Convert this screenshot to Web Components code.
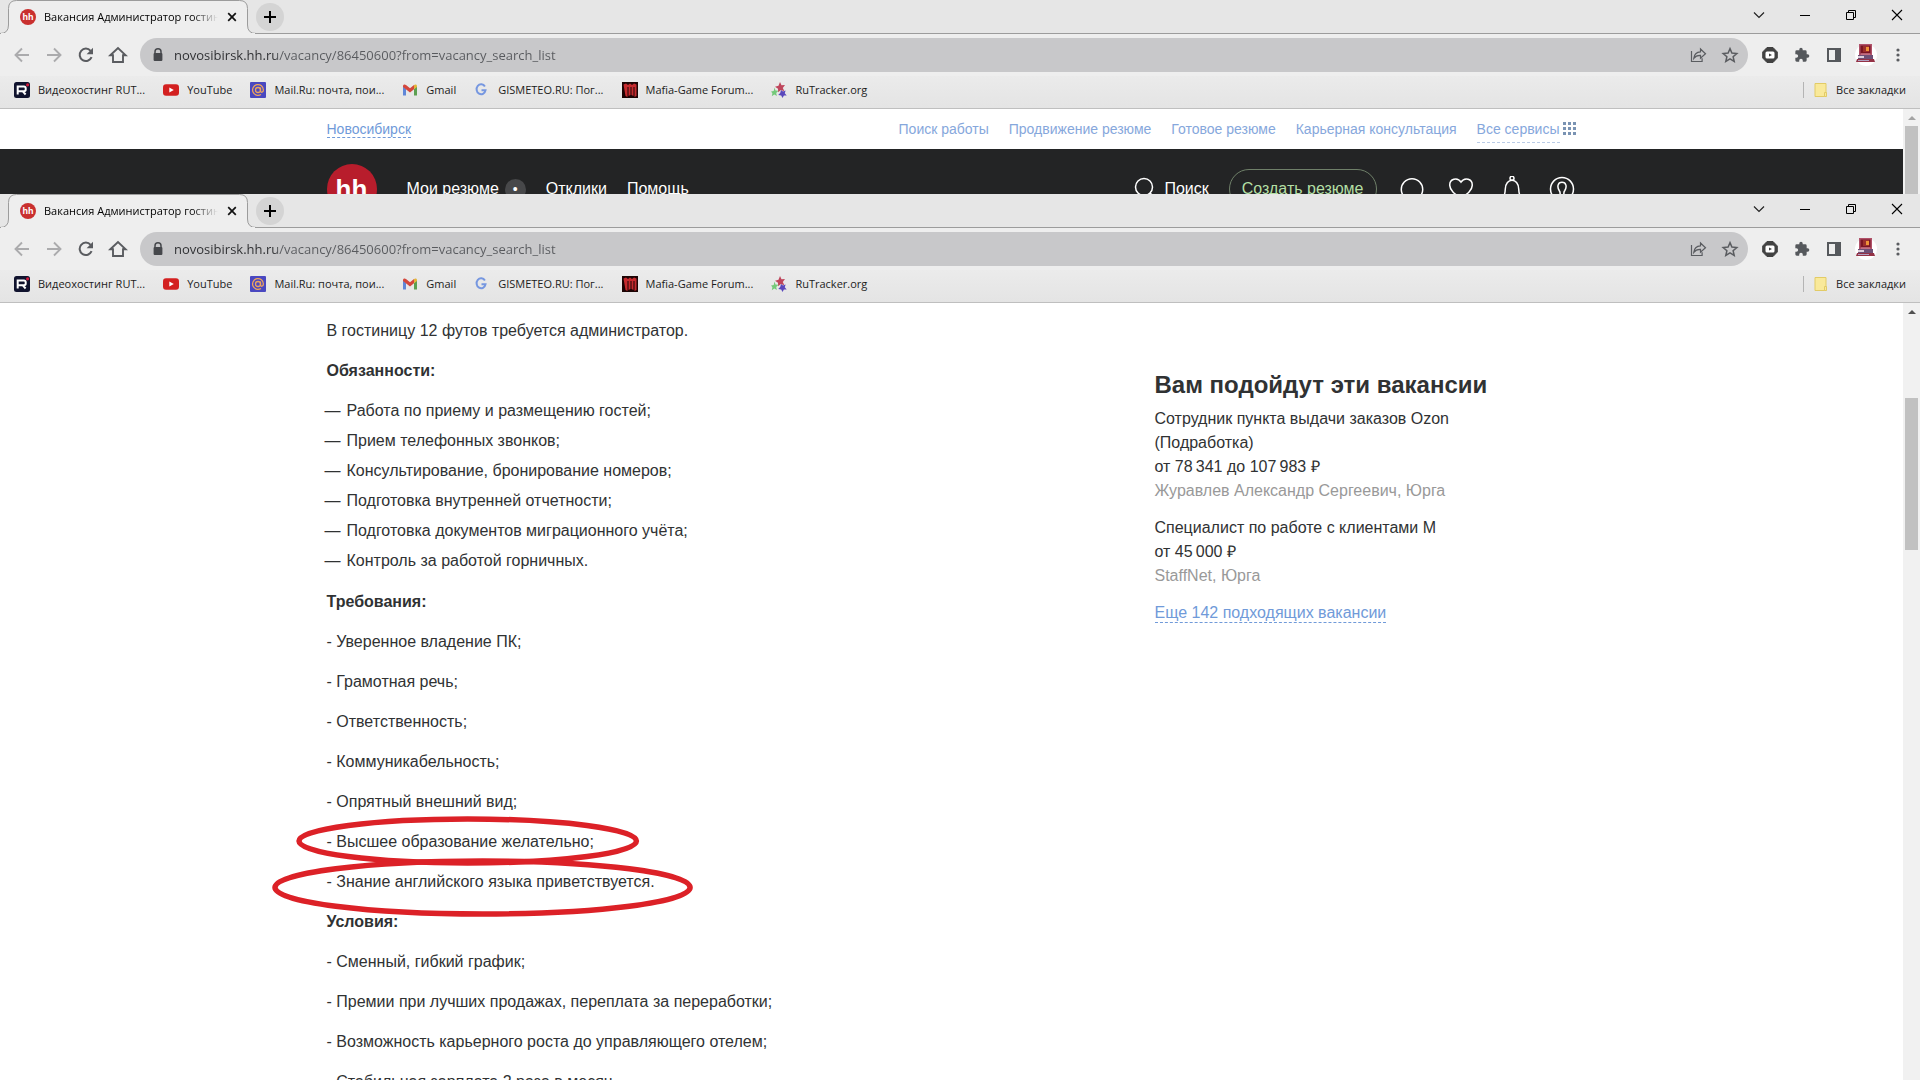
<!DOCTYPE html>
<html lang="ru">
<head>
<meta charset="utf-8">
<title>Вакансия Администратор гостиницы</title>
<style>
	html, body {height: 100%;}
	body {
		margin: 0;
		background: #fff;
		overflow: hidden;
	}
</style>
</head>
<body>
<hh-desktop>
	<browser-window slot="back" offset="0" thumb="300" idle>
		<hh-topbar></hh-topbar>
		<hh-header></hh-header>
	</browser-window>
	<browser-window slot="front" offset="78" thumb="152">
		<hh-vacancy>
			<hh-description></hh-description>
			<hh-similar slot="aside"></hh-similar>
		</hh-vacancy>
	</browser-window>
</hh-desktop>
<script>
const define = (name, html, init) => {
	const template = document.createElement('template');
	template.innerHTML = html;
	customElements.define(name, class extends HTMLElement {
		connectedCallback() {
			if (this.shadowRoot) return;
			this.attachShadow({mode: 'open'}).appendChild(template.content.cloneNode(true));
			if (init) init(this, this.shadowRoot);
		}
	});
};

// [viewBox size, markup]
const ICONS = {
	back: [20, '<path d="M17 10H4M10 3.5 3.5 10l6.500 6.500" fill="none" stroke="currentColor" stroke-width="1.900"/>'],
	forward: [20, '<path d="M3 10h13M10 3.500 16.500 10 10 16.500" fill="none" stroke="currentColor" stroke-width="1.900"/>'],
	reload: [20, '<path d="M15.600 12.200A6.200 6.200 0 1 1 14.600 5.800" fill="none" stroke="currentColor" stroke-width="2"/><path d="M17 2.800v6.400h-6.400z" fill="currentColor"/>'],
	home: [20, '<path d="M2.300 10.300 10 3l7.700 7.300H15V17H5v-6.700z" fill="none" stroke="currentColor" stroke-width="1.900"/>'],
	lock: [16, '<path d="M5 7V4.800a3 3 0 0 1 6 0V7" fill="none" stroke="currentColor" stroke-width="1.500"/><rect x="3.600" y="6" width="8.800" height="8" rx="1" fill="currentColor"/>'],
	share: [18, '<path d="M2.500 5v10.500h10.600v-3.300M4.800 12.300c.4-4.100 2.800-6.300 6.700-6.500V3l5 4.700-5 4.500V9.400c-3-.1-5.200.8-6.700 2.900z" fill="none" stroke="currentColor" stroke-width="1.200"/>'],
	star: [18, '<path d="m9 2.600 1.900 4.500 4.900.4-3.700 3.200 1.100 4.700L9 12.900l-4.200 2.500 1.100-4.700-3.700-3.200 4.900-.4z" fill="none" stroke="currentColor" stroke-width="1.500"/>'],
	video: [16, '<path d="M5 .5h6L15.300 5v6L11 15.500H5L.7 11V5z" fill="#424242" stroke="#424242" stroke-linejoin="round"/><rect x="3.500" y="4.500" width="9" height="7" rx="1.500" fill="#fff"/><path d="m7 6.500 3 1.500-3 1.500z" fill="#424242"/>'],
	puzzle: [24, '<path d="M20.500 11H19V7a2 2 0 0 0-2-2h-4V3.500a2.500 2.500 0 0 0-5 0V5H4a2 2 0 0 0-2 2v3.800h1.500a2.700 2.700 0 0 1 0 5.400H2V20a2 2 0 0 0 2 2h3.800v-1.500a2.700 2.700 0 0 1 5.400 0V22H17a2 2 0 0 0 2-2v-4h1.500a2.500 2.500 0 0 0 0-5z" fill="#55585c"/>'],
	panel: [16, '<path d="M1 1h14v14H1zM3 3v10h6V3z" fill="#55585c" fill-rule="evenodd"/>'],
	avatar: [22, '<circle cx="11" cy="11" r="11" fill="#fff"/><path d="M4 0h13v11H4z" fill="#b0526a"/><path d="M5.500 1.500h10v8h-10z" fill="#7a1522"/><path d="M8 2h6v6H8z" fill="#9c2f2c"/><path d="M11 3h3v4h-3z" fill="#ee9338"/><path d="M6 9.500h9v1H6z" fill="#d98a9a"/><path d="M3 11h15v4H3z" fill="#6e5076"/><path d="M3 12h6v2H3z" fill="#ded0dc"/><path d="M2 15h17l1 3H1z" fill="#943246"/><path d="M3 16h11v1H3z" fill="#b0a0c0"/>'],
	more: [16, '<circle cx="8" cy="3" r="1.600"/><circle cx="8" cy="8" r="1.600"/><circle cx="8" cy="13" r="1.600"/>'],
	down: [12, '<path d="m1 3.500 5 5 5-5" fill="none" stroke="#222" stroke-width="1.200"/>'],
	minimize: [12, '<path d="M1 6.500h10" stroke="#000"/>'],
	restore: [12, '<path d="M1.500 3.500h7v7h-7zM3.500 3.500v-2h7v7h-2" fill="none" stroke="#000"/>'],
	close: [12, '<path d="m1 1 10 10M11 1 1 11" stroke="#000" stroke-width="1.100"/>'],
	cross: [10, '<path d="m1.200 1.200 7.600 7.600M8.800 1.200 1.200 8.800" stroke="#111" stroke-width="1.700"/>'],
	plus: [14, '<path d="M7 1v12M1 7h12" stroke="#000" stroke-width="2"/>'],
	rutube: [16, '<rect width="16" height="16" rx="2.500" fill="#10132e"/><path d="M3.700 12.500v-8H10a1.700 1.700 0 0 1 1.700 1.700v1.300A1.700 1.700 0 0 1 10 9.200H3.700M8.600 9.200l3 3.300" fill="none" stroke="#fff" stroke-width="2"/><circle cx="13.600" cy="2.800" r="1.600" fill="#d21b3c"/>'],
	youtube: [16, '<rect y="2.300" width="16" height="11.400" rx="3" fill="#d32020"/><path d="m6.300 5.600 4.500 2.400-4.500 2.400z" fill="#fff"/>'],
	mail: [16, '<rect width="16" height="16" rx="1" fill="#4a48c0"/><circle cx="8" cy="8" r="2.500" fill="none" stroke="#eda45e" stroke-width="1.300"/><path d="M10.500 5.500v3.300c0 2.200 2.900 1.800 2.900-.8A5.400 5.400 0 1 0 11 12.500" fill="none" stroke="#eda45e" stroke-width="1.300"/>'],
	gmail: [16, '<path d="M1 4v9.500h3V7z" fill="#6087d8"/><path d="M12 7v6.500h3V4z" fill="#5da052"/><path d="M12 7.200 15 5V4c0-1.600-1.700-2-3-1z" fill="#e2b53a"/><path d="M1 4c0-1.600 1.800-2 3-1l4 3.200L12 3v4.200l-4 3.200L1 5z" fill="#d4473c"/>'],
	google: [16, '<path d="M9.400 4.900A4.500 5 0 1 0 10 8.600H6" transform="translate(1.500 -.3)" fill="none" stroke="#7697e0" stroke-width="2"/>'],
	mafia: [16, '<rect width="16" height="16" fill="#1c0404"/><path d="M1.500 2.500 4 1.500l2 1.500 2-1.500L10 3l2-1.500 2.500 1V14l-2 1V5h-1v9l-2-1V5h-1v8l-2 1V5h-1v10l-2-1z" fill="#c52a2e"/>'],
	rutracker: [16, '<path d="m9 0 1.500 3.200L14 3l-2.200 3 1.600 3.200L9.900 8 7.100 10.300 7 6.700 4 4.800l3.500-1z" fill="#bf465c"/><path d="m3.500 5.500 1 3 3 .3-2.300 2.100.7 3.100-2.600-1.600-2.500 1.900.6-3L0 9.500l2.700-.4z" fill="#75c97a"/><path d="m10 8 2 1.500 2.600-1-.8 2.700 1.900 2.300-2.800.1L11.500 16l-1.300-2.600-3-.3 2-2z" fill="#5a48bc"/>'],
	folder: [16, '<path d="M3 1.500h11v13H3z" fill="#f9e99a" stroke="#e2cb66"/><path d="M12.500 14.500v-4h2v4z" fill="#f9e99a" stroke="#e2cb66"/>'],
	apps: [14, '<path d="M0 1h3v3H0zM5 1h3v3H5zM10 1h3v3h-3zM0 6h3v3H0zM5 6h3v3H5zM10 6h3v3h-3zM0 11h3v3H0zM5 11h3v3H5zM10 11h3v3h-3z" fill="#7a93b3"/>'],
	search: [24, '<circle cx="12" cy="10" r="8.500" fill="none" stroke="#fff" stroke-width="1.500"/><path d="m18 16 5 5" stroke="#fff" stroke-width="1.500"/>'],
	chat: [24, '<path d="M5 20.500A10.700 10.700 0 1 1 19 20.500L12 23z" fill="none" stroke="#fff" stroke-width="1.500"/>'],
	heart: [24, '<path d="M12 21.500C6 17 1 13.500.8 8.600.2 1.700 8.500-.3 12 5.200 15.500-.3 23.800 1.700 23.200 8.600 23 13.500 18 17 12 21.500z" fill="none" stroke="#fff" stroke-width="1.500"/>'],
	bell: [26, '<circle cx="14" cy="2.300" r="2" fill="none" stroke="#fff" stroke-width="1.500"/><path d="M4 23c2-2 3-4 3.300-10 .2-5.500 3.200-8.700 6.700-8.700s6.500 3.200 6.700 8.700c.3 6 1.300 8 3.300 10z" fill="none" stroke="#fff" stroke-width="1.500"/>'],
	person: [26, '<circle cx="13" cy="13" r="11.500" fill="none" stroke="#fff" stroke-width="1.500"/><path d="M10.500 19.500c1.200-2 .7-3.500-.3-5C8 11 8.500 6.300 13 6.300s5 4.700 2.800 8.200c-1 1.500-1.500 3-.3 5" fill="none" stroke="#fff" stroke-width="1.500"/>'],
};

define('ui-icon', `
<style>
	:host {display: inline-flex; flex: none;}
	svg {display: block; fill: currentColor;}
</style>
`, (el, root) => {
	const [box, markup] = ICONS[el.getAttribute('name')];
	const size = el.getAttribute('size') || box;
	root.innerHTML += `<svg width="${size}" height="${size}" viewBox="0 0 ${box} ${box}" aria-hidden="true">${markup}</svg>`;
});

define('hh-logo', `
<style>
	:host {
		--size: 50px;
		display: inline-flex;
		flex: none;
		align-items: center;
		justify-content: center;
		width: var(--size);
		height: var(--size);
		border-radius: 50%;
		background: var(--red, #b81d2c);
		color: #fff;
		font: bold var(--text, 26px)/1 "Liberation Sans", Arial, sans-serif;
	}
</style>
<span>hh</span>
`);

define('browser-tabs', `
<style>
	:host {
		display: flex;
		height: 34px;
		box-sizing: border-box;
		border-bottom: 1px solid #9c9c9c;
		background: #e6e6e6;
		font: 11px/16px "Open Sans", "Noto Sans", sans-serif;
		color: #000;
	}
	button {
		display: flex;
		align-items: center;
		justify-content: center;
		border: 0;
		padding: 0;
		background: none;
	}
	/* the outline hangs over the strip's bottom line */
	.tab {
		position: relative;
		display: flex;
		align-items: center;
		width: 256px;
		height: 34px;
		box-sizing: border-box;
		padding: 0 18px 0 20px;
		gap: 8px;
		flex: none;
	}
	.tab > svg {position: absolute; left: 0; top: 0;}
	.tab > :not(svg) {position: relative;}
	hh-logo {--size: 16px; --text: 9px; --red: #c9302f;}
	.title {
		flex: 1;
		overflow: hidden;
		white-space: nowrap;
		-webkit-mask-image: linear-gradient(90deg, #000 85%, transparent);
		mask-image: linear-gradient(90deg, #000 85%, transparent);
	}
	.tab button {width: 12px; height: 16px;}
	.new {
		width: 28px;
		height: 28px;
		margin-top: 3px;
		border-radius: 50%;
		background: #d4d4d4;
	}
	.controls {display: flex; height: 29px; margin-left: auto;}
	.controls button {width: 46px;}
</style>
<div class="tab">
	<svg width="256" height="34" aria-hidden="true">
		<path d="M0 33.500Q8.500 33.500 8.500 25V8.500Q8.500.5 16.500.5H239.500Q247.500.5 247.500 8.500V25Q247.500 33.500 256 33.500" fill="#eee" stroke="#9c9c9c"/>
		<path d="M1 33.500H255" stroke="#eee"/>
	</svg>
	<hh-logo></hh-logo>
	<span class="title">Вакансия Администратор гостиницы</span>
	<button aria-label="Закрыть вкладку"><ui-icon name="cross"></ui-icon></button>
</div>
<button class="new" aria-label="Новая вкладка"><ui-icon name="plus"></ui-icon></button>
<div class="controls">
	<button aria-label="Поиск вкладок"><ui-icon name="down"></ui-icon></button>
	<button aria-label="Свернуть"><ui-icon name="minimize"></ui-icon></button>
	<button aria-label="Восстановить"><ui-icon name="restore"></ui-icon></button>
	<button aria-label="Закрыть"><ui-icon name="close"></ui-icon></button>
</div>
`);

define('browser-toolbar', `
<style>
	:host {
		display: flex;
		align-items: center;
		padding: 4px 6px;
		background: #eee;
		color: #5a5c60;
	}
	button {
		display: flex;
		align-items: center;
		justify-content: center;
		flex: none;
		width: 32px;
		height: 32px;
		border: 0;
		padding: 0;
		background: none;
		color: inherit;
	}
	button[disabled] {color: #ababad;}
	form {
		display: flex;
		align-items: center;
		flex: 1;
		height: 34px;
		margin: 0 6px;
		padding: 0 2px 0 10px;
		border-radius: 17px;
		background: #c8c8ca;
	}
	label {display: flex; color: #46484c;}
	/* host name darker than the path */
	input {
		flex: 1;
		min-width: 0;
		border: 0;
		outline: 0;
		padding: 0;
		margin-left: 8px;
		font: 13px/20px "Open Sans", "Noto Sans", sans-serif;
		color: transparent;
		background: linear-gradient(90deg, #2c2d30 103px, #585a5e 103px);
		-webkit-background-clip: text;
		background-clip: text;
	}
</style>
<button aria-label="Назад" disabled><ui-icon name="back"></ui-icon></button>
<button aria-label="Вперёд" disabled><ui-icon name="forward"></ui-icon></button>
<button aria-label="Обновить"><ui-icon name="reload"></ui-icon></button>
<button aria-label="Главная"><ui-icon name="home"></ui-icon></button>
<form>
	<label for="url" aria-label="Адрес"><ui-icon name="lock"></ui-icon></label>
	<input id="url" type="text" value="novosibirsk.hh.ru/vacancy/86450600?from=vacancy_search_list">
	<button type="button" aria-label="Поделиться"><ui-icon name="share"></ui-icon></button>
	<button type="button" aria-label="В закладки"><ui-icon name="star"></ui-icon></button>
</form>
<button aria-label="Видео"><ui-icon name="video"></ui-icon></button>
<button aria-label="Расширения"><ui-icon name="puzzle" size="16"></ui-icon></button>
<button aria-label="Боковая панель"><ui-icon name="panel"></ui-icon></button>
<button aria-label="Профиль"><ui-icon name="avatar"></ui-icon></button>
<button aria-label="Меню"><ui-icon name="more"></ui-icon></button>
`);

const BOOKMARKS = [
	['rutube', 'Видеохостинг RUT...'],
	['youtube', 'YouTube'],
	['mail', 'Mail.Ru: почта, пои...'],
	['gmail', 'Gmail'],
	['google', 'GISMETEO.RU: Пог...'],
	['mafia', 'Mafia-Game Forum...'],
	['rutracker', 'RuTracker.org'],
];

define('browser-bookmarks', `
<style>
	:host {
		display: flex;
		height: 33px;
		box-sizing: border-box;
		padding: 0 14px 4px;
		border-bottom: 1px solid #bfbfbf;
		background: linear-gradient(#ebebeb, #e4e4e4);
		font: 11px/16px "Open Sans", "Noto Sans", sans-serif;
	}
	nav {display: flex; gap: 18px;}
	a {
		display: flex;
		align-items: center;
		gap: 8px;
		color: #1c1c1c;
		text-decoration: none;
		white-space: nowrap;
	}
	.all {margin-left: auto;}
	.all::before {
		content: "";
		width: 1px;
		height: 16px;
		background: #b4b4b4;
	}
</style>
<nav></nav>
<a class="all" href="#"><ui-icon name="folder"></ui-icon><span>Все закладки</span></a>
`, (el, root) => {
	root.querySelector('nav').innerHTML = BOOKMARKS.map(([icon, text]) =>
		`<a href="#"><ui-icon name="${icon}"></ui-icon><span>${text}</span></a>`
	).join('');
});

define('scroll-bar', `
<style>
	:host {
		display: flex;
		flex-direction: column;
		align-items: center;
		flex: none;
		width: 17px;
		overflow: hidden;
		background: #f1f1f1;
		color: #505050;
	}
	:host([idle]) {color: #a3a3a3;}
	.up {
		display: flex;
		align-items: center;
		justify-content: center;
		flex: none;
		width: 17px;
		height: 17px;
	}
	.up::before {
		content: "";
		border: 4px solid transparent;
		border-top: 0;
		border-bottom-color: currentColor;
	}
	.thumb {
		flex: none;
		width: 13px;
		height: var(--thumb);
		margin-top: var(--offset);
		background: #c1c1c1;
	}
</style>
<div class="up"></div>
<div class="thumb"></div>
`);

define('browser-window', `
<style>
	:host {
		display: flex;
		flex-direction: column;
		min-height: 0;
		overflow: hidden;
		background: #fff;
	}
	.view {display: flex; flex: 1; min-height: 0;}
	main {flex: 1; min-width: 0; overflow: hidden;}
</style>
<browser-tabs></browser-tabs>
<browser-toolbar></browser-toolbar>
<browser-bookmarks></browser-bookmarks>
<div class="view">
	<main><slot></slot></main>
	<scroll-bar></scroll-bar>
</div>
`, (el, root) => {
	const bar = root.querySelector('scroll-bar');
	bar.style.setProperty('--offset', el.getAttribute('offset') + 'px');
	bar.style.setProperty('--thumb', el.getAttribute('thumb') + 'px');
	bar.toggleAttribute('idle', el.hasAttribute('idle'));
});

define('hh-desktop', `
<style>
	:host {
		display: grid;
		grid-template-rows: 194px minmax(0, 1fr);
		height: 100vh;
	}
</style>
<slot name="back"></slot>
<slot name="front"></slot>
`);

define('hh-topbar', `
<style>
	:host {
		display: flex;
		align-items: center;
		max-width: 1250px;
		height: 40px;
		margin: 0 auto;
		font: 14px/16px "Liberation Sans", Arial, sans-serif;
	}
	nav {display: flex; gap: 20px; margin-left: auto;}
	a {color: #86a7dc; text-decoration: none; white-space: nowrap;}
	.city {color: #709ad9; border-bottom: 1px dashed #709ad9;}
	.services {display: flex; gap: 3px;}
	.services span {margin-bottom: -6px; padding-bottom: 5px; border-bottom: 1px dashed #b9cbe6;}
</style>
<a class="city" href="#">Новосибирск</a>
<nav>
	<a href="#">Поиск работы</a>
	<a href="#">Продвижение резюме</a>
	<a href="#">Готовое резюме</a>
	<a href="#">Карьерная консультация</a>
	<a class="services" href="#"><span>Все сервисы</span><ui-icon name="apps"></ui-icon></a>
</nav>
`);

define('hh-header', `
<style>
	:host {
		display: block;
		background: #232425;
		font: 16px/20px "Liberation Sans", Arial, sans-serif;
	}
	.row {
		display: flex;
		align-items: center;
		max-width: 1250px;
		height: 80px;
		margin: 0 auto;
	}
	a {color: #fff; text-decoration: none; white-space: nowrap;}
	nav {display: flex; gap: 20px; margin-left: 30px;}
	nav a, .search {display: flex; align-items: center; gap: 6px;}
	.badge {
		width: 21px;
		height: 21px;
		border-radius: 50%;
		background: #47484a;
		font-size: 14px;
		text-align: center;
	}
	.tools {display: flex; align-items: center; margin-left: auto; padding-right: 2px;}
	.search {gap: 8px; margin-right: 20px;}
	.create {
		height: 40px;
		box-sizing: border-box;
		padding: 0 12px;
		margin-right: 23px;
		border: 1px solid #6f8069;
		border-radius: 20px;
		background: none;
		color: #b3dfa4;
		font: inherit;
	}
	.icons {display: flex; align-items: center; gap: 25px;}
	.icons button {display: flex; border: 0; padding: 0; background: none;}
</style>
<div class="row">
	<a href="#" aria-label="hh"><hh-logo></hh-logo></a>
	<nav>
		<a href="#">Мои резюме <span class="badge">•</span></a>
		<a href="#">Отклики</a>
		<a href="#">Помощь</a>
	</nav>
	<div class="tools">
		<a class="search" href="#"><ui-icon name="search"></ui-icon>Поиск</a>
		<button class="create">Создать резюме</button>
		<div class="icons">
			<button aria-label="Чаты"><ui-icon name="chat"></ui-icon></button>
			<button aria-label="Избранное"><ui-icon name="heart"></ui-icon></button>
			<button aria-label="Уведомления"><ui-icon name="bell"></ui-icon></button>
			<button aria-label="Профиль"><ui-icon name="person"></ui-icon></button>
		</div>
	</div>
</div>
`);

define('hh-vacancy', `
<style>
	:host {
		display: grid;
		grid-template-columns: minmax(0, 828px) minmax(0, 1fr);
		max-width: 1250px;
		margin: 0 auto;
		padding-top: 16px;
		font: 16px/24px "Liberation Sans", Arial, sans-serif;
		color: #303233;
	}
</style>
<slot></slot>
<slot name="aside"></slot>
`);

// red ellipse drawn over a line of text
define('red-mark', `
<style>
	:host {display: inline-block; position: relative;}
	div {position: absolute; inset: -11px -42px -9px -28px;}
	:host([wide]) div {inset: -9px -35px -20px -52px;}
	svg {display: block; width: 100%; height: 100%; overflow: visible;}
</style>
<slot></slot>
<div>
	<svg aria-hidden="true">
		<ellipse cx="50%" cy="50%" rx="50%" ry="50%" fill="none" stroke="#dc2127" stroke-width="5.500"/>
	</svg>
</div>
`);

define('hh-description', `
<style>
	:host {display: block;}
	p {margin: 0 0 16px;}
	ul {margin: 0 0 17px; padding: 0; list-style: none;}
	li {display: flex; gap: 4px; margin-bottom: 6px; margin-left: -2px;}
	li::before {content: "—"; width: 18px;}
	li:last-child {margin-bottom: 0;}
	strong {font-weight: 700;}
</style>
<p>В гостиницу 12 футов требуется администратор.</p>
<p><strong>Обязанности:</strong></p>
<ul>
	<li>Работа по приему и размещению гостей;</li>
	<li>Прием телефонных звонков;</li>
	<li>Консультирование, бронирование номеров;</li>
	<li>Подготовка внутренней отчетности;</li>
	<li>Подготовка документов миграционного учёта;</li>
	<li>Контроль за работой горничных.</li>
</ul>
<p><strong>Требования:</strong></p>
<p>- Уверенное владение ПК;</p>
<p>- Грамотная речь;</p>
<p>- Ответственность;</p>
<p>- Коммуникабельность;</p>
<p>- Опрятный внешний вид;</p>
<p><red-mark>- Высшее образование желательно;</red-mark></p>
<p><red-mark wide>- Знание английского языка приветствуется.</red-mark></p>
<p><strong>Условия:</strong></p>
<p>- Сменный, гибкий график;</p>
<p>- Премии при лучших продажах, переплата за переработки;</p>
<p>- Возможность карьерного роста до управляющего отелем;</p>
<p>- Стабильная зарплата 2 раза в месяц</p>
`);

define('hh-similar', `
<style>
	:host {display: block; padding-top: 50px;}
	h2 {margin: 0 0 6px; font-size: 24px; line-height: 32px;}
	article {max-width: 320px; margin-bottom: 13px;}
	article a {color: inherit; text-decoration: none;}
	small {display: block; font-size: inherit; color: #999;}
	.more {
		display: inline-block;
		line-height: 18px;
		margin-top: 3px;
		color: #709ad9;
		text-decoration: none;
		border-bottom: 1px dashed #709ad9;
	}
</style>
<h2>Вам подойдут эти вакансии</h2>
<article>
	<a href="#">Сотрудник пункта выдачи заказов Ozon (Подработка)</a>
	<div>от 78&#8239;341 до 107&#8239;983 ₽</div>
	<small>Журавлев Александр Сергеевич, Юрга</small>
</article>
<article>
	<a href="#">Специалист по работе с клиентами M</a>
	<div>от 45&#8239;000 ₽</div>
	<small>StaffNet, Юрга</small>
</article>
<a class="more" href="#">Еще 142 подходящих вакансии</a>
`);
</script>
</body>
</html>
